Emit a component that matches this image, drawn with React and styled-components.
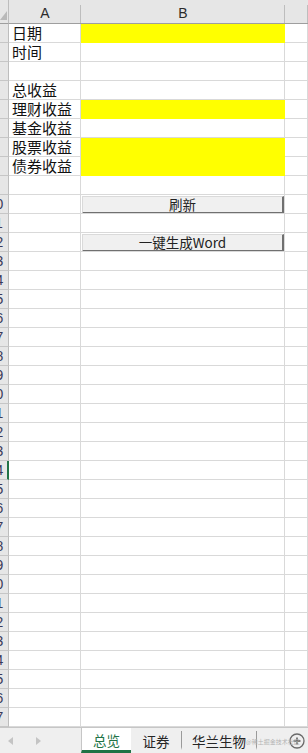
import React from 'react';
import styled, { createGlobalStyle } from 'styled-components';

const GlobalStyle = createGlobalStyle`
  html, body {
    margin: 0;
    padding: 0;
    background: #fff;
    overflow: hidden;
  }
  body {
    font-family: "Noto Sans CJK SC", "Noto Sans", sans-serif;
  }
`;

const Page = styled.div`
  width: 308px;
  height: 753px;
  display: flex;
  flex-direction: column;
  overflow: hidden;
`;

const Sheet = styled.div`
  display: grid;
  grid-template-columns: 9px 72px 204px 23px;
  grid-auto-rows: 19px;
  grid-template-rows: 24px;
  flex: 1;
  overflow: hidden;
`;

const Corner = styled.div`
  background: #e6e6e6;
  border-right: 1px solid #bdbdbd;
  border-bottom: 1px solid #9e9e9e;
  display: flex;
  align-items: flex-end;
  padding-bottom: 3px;
  box-sizing: border-box;
`;

const ColHeader = styled.div`
  background: #e6e6e6;
  border-bottom: 1px solid #9e9e9e;
  box-sizing: border-box;
  position: relative;
  display: flex;
  align-items: center;
  justify-content: center;
  font-family: "Liberation Sans", Arial, sans-serif;
  font-size: 14px;
  color: #2b2b2b;
  padding-top: 3px;

  &::after {
    content: '';
    position: absolute;
    right: 0;
    top: 5px;
    bottom: 0;
    width: 1px;
    background: #bdbdbd;
  }
`;

const RowHeader = styled.div`
  background: #e6e6e6;
  border-right: ${(p) => (p.$active ? '2px solid #217346' : '1px solid #bdbdbd')};
  border-bottom: 1px solid #c6c6c6;
  box-sizing: border-box;
  overflow: hidden;
  font-family: "Liberation Sans", Arial, sans-serif;
  font-size: 14px;
  color: #3a3a5a;
  line-height: 19px;
`;

const RowNum = styled.span`
  display: block;
  width: 27px;
  margin-left: -18px;
  text-align: center;
`;

const Cell = styled.div`
  box-sizing: border-box;
  background: ${(p) => p.$fill || '#fff'};
  border-right: 1px solid ${(p) => p.$fill || '#d9d9d9'};
  border-bottom: 1px solid ${(p) => p.$fill || '#d9d9d9'};
  font-size: 15px;
  line-height: 18px;
  color: #111;
  padding-left: 3px;
  white-space: nowrap;
  overflow: hidden;
  display: flex;
  align-items: center;
`;

const FormButton = styled.button`
  box-sizing: border-box;
  width: 202px;
  height: 18px;
  margin: 1px 0 0 -2px;
  padding: 0;
  background: #f0f0f0;
  border-top: 1px solid #dadada;
  border-left: 1px solid #dadada;
  border-right: 2px solid #707070;
  border-bottom: 2px solid #707070;
  font-family: "Noto Sans CJK SC", "Noto Sans", sans-serif;
  font-size: 13.5px;
  line-height: 14px;
  color: #222;
  cursor: pointer;
`;

const TabBar = styled.div`
  height: 26px;
  flex-shrink: 0;
  background: #efefef;
  border-top: 1px solid #c6c6c6;
  box-sizing: border-box;
  display: flex;
  align-items: stretch;
  position: relative;
`;

const NavArea = styled.div`
  width: 81px;
  display: flex;
  align-items: center;
  gap: 21px;
  padding-left: 8px;
  box-sizing: border-box;
`;

const Tab = styled.div`
  width: ${(p) => p.$w}px;
  box-sizing: border-box;
  display: flex;
  align-items: center;
  justify-content: center;
  font-size: 13.5px;
  color: ${(p) => (p.$active ? '#217346' : '#262626')};
  background: ${(p) => (p.$active ? '#fff' : 'transparent')};
  border-bottom: ${(p) => (p.$active ? '3px solid #217346' : '3px solid transparent')};
  border-right: ${(p) => (p.$sep ? '1px solid #9a9a9a' : 'none')};
  margin-top: ${(p) => (p.$active ? '0' : '3px')};
  margin-bottom: ${(p) => (p.$active ? '0' : '3px')};
  padding-top: ${(p) => (p.$active ? '1px' : '3px')};
  border-left: ${(p) => (p.$active ? '1px solid #c6c6c6' : 'none')};
  border-right-color: ${(p) => (p.$active ? '#c6c6c6' : '#9a9a9a')};
`;

const AddButton = styled.div`
  margin-left: auto;
  width: 23px;
  display: flex;
  align-items: center;
  justify-content: center;
`;

const Watermark = styled.span`
  position: absolute;
  left: 246px;
  top: 9px;
  font-size: 6px;
  color: #b4b4b4;
  white-space: nowrap;
  letter-spacing: 0;
`;

const labels = ['日期', '时间', '', '总收益', '理财收益', '基金收益', '股票收益', '债券收益'];
const yellowRows = [1, 5, 7, 8];
const buttons = { 10: '刷新', 12: '一键生成Word' };
const TOTAL_ROWS = 37;

const App = () => {
  const rows = Array.from({ length: TOTAL_ROWS }, (_, i) => i + 1);

  return (
    <Page>
      <GlobalStyle />
      <Sheet>
        <Corner>
          <svg width="8" height="9" viewBox="0 0 8 9">
            <path d="M7 0 L7 9 L0 9 Z" fill="#b9b9b9" />
          </svg>
        </Corner>
        <ColHeader>A</ColHeader>
        <ColHeader>B</ColHeader>
        <ColHeader />
        {rows.map((r) => (
          <React.Fragment key={r}>
            <RowHeader $active={r === 24}>
              <RowNum>{r}</RowNum>
            </RowHeader>
            <Cell>{labels[r - 1] || ''}</Cell>
            <Cell $fill={yellowRows.includes(r) ? '#ffff00' : undefined}>
              {buttons[r] && <FormButton>{buttons[r]}</FormButton>}
            </Cell>
            <Cell />
          </React.Fragment>
        ))}
      </Sheet>
      <TabBar>
        <NavArea>
          <svg width="6" height="8" viewBox="0 0 6 8">
            <path d="M5 0 L5 8 L0 4 Z" fill="#c4c4c4" />
          </svg>
          <svg width="6" height="8" viewBox="0 0 6 8">
            <path d="M1 0 L1 8 L6 4 Z" fill="#c4c4c4" />
          </svg>
        </NavArea>
        <Tab $w={50} $active>总览</Tab>
        <Tab $w={51} $sep>证券</Tab>
        <Tab $w={75} $sep>华兰生物</Tab>
        <Watermark>@稀土掘金技术社区</Watermark>
        <AddButton>
          <svg width="16" height="16" viewBox="0 0 16 16">
            <circle cx="8" cy="8" r="7" fill="none" stroke="#6a6a6a" strokeWidth="1.3" />
            <path d="M8 4.5 V11.5 M4.5 8 H11.5" stroke="#5a5a5a" strokeWidth="1.5" />
          </svg>
        </AddButton>
      </TabBar>
    </Page>
  );
};

export default App;
